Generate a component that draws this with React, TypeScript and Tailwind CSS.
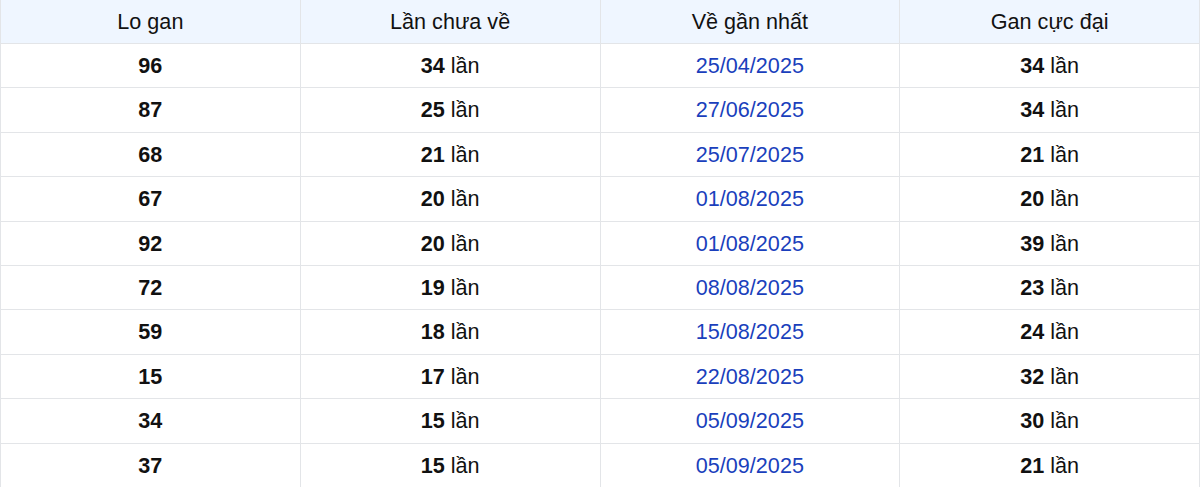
const rows = [
  { so: '96', chua: 34, ngay: '25/04/2025', max: 34 },
  { so: '87', chua: 25, ngay: '27/06/2025', max: 34 },
  { so: '68', chua: 21, ngay: '25/07/2025', max: 21 },
  { so: '67', chua: 20, ngay: '01/08/2025', max: 20 },
  { so: '92', chua: 20, ngay: '01/08/2025', max: 39 },
  { so: '72', chua: 19, ngay: '08/08/2025', max: 23 },
  { so: '59', chua: 18, ngay: '15/08/2025', max: 24 },
  { so: '15', chua: 17, ngay: '22/08/2025', max: 32 },
  { so: '34', chua: 15, ngay: '05/09/2025', max: 30 },
  { so: '37', chua: 15, ngay: '05/09/2025', max: 21 },
];

const headers = ['Lo gan', 'Lần chưa về', 'Về gần nhất', 'Gan cực đại'];

export default function App() {
  return (
    <div className="w-[1200px] bg-white font-['Liberation_Sans',Arial,sans-serif] text-[21.6px] text-[#111]">
      <table className="w-full table-fixed border-collapse">
        <thead>
          <tr className="bg-[#eff6ff]">
            {headers.map((h) => (
              <th
                key={h}
                className="border border-t-0 border-[#e3e5e8] py-2 leading-[27px] font-normal text-center"
              >
                {h}
              </th>
            ))}
          </tr>
        </thead>
        <tbody>
          {rows.map((r, i) => (
            <tr key={i}>
              <td className="border border-[#e3e5e8] py-2 leading-[27.4px] text-center font-bold">{r.so}</td>
              <td className="border border-[#e3e5e8] py-2 leading-[27.4px] text-center">
                <b>{r.chua}</b> lần
              </td>
              <td className="border border-[#e3e5e8] py-2 leading-[27.4px] text-center text-[#1a3fbc]">{r.ngay}</td>
              <td className="border border-[#e3e5e8] py-2 leading-[27.4px] text-center">
                <b>{r.max}</b> lần
              </td>
            </tr>
          ))}
        </tbody>
      </table>
    </div>
  );
}
